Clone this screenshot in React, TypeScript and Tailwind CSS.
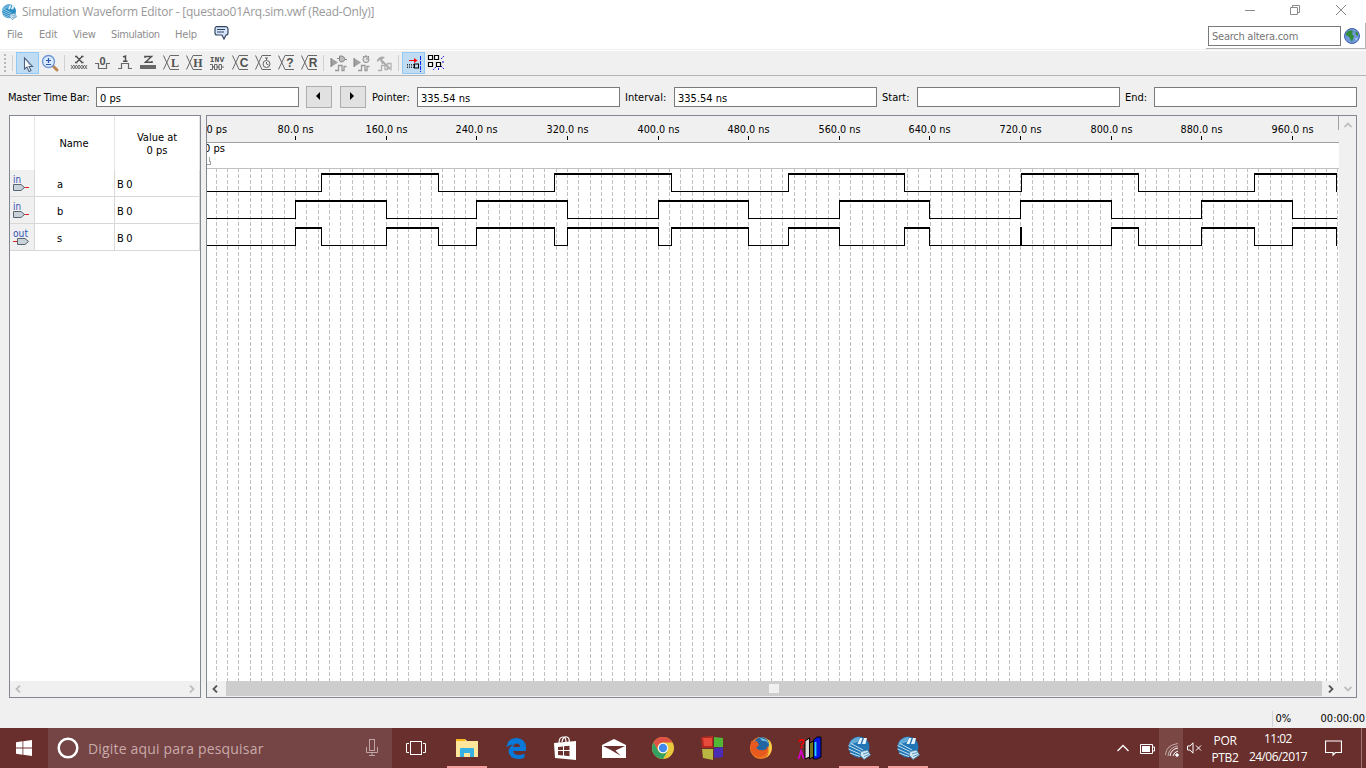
import React from "react";

const UI = "font-['DejaVu_Sans_Condensed','DejaVu_Sans','Noto_Sans',sans-serif]";

const A_EDGES = [321, 438, 554, 671, 788, 904, 1021, 1138, 1254, 1336];
const B_EDGES = [295, 386, 476, 567, 658, 748, 839, 929, 1020, 1111, 1201, 1292];
const S_EDGES = [
  295, 321, 386, 438, 476, 554, 567, 658, 671, 748, 788, 839, 904, 929, 1020, 1021,
  1111, 1138, 1201, 1254, 1292, 1336,
];
const CHART_LEFT = 207;
const CHART_RIGHT = 1337;

function Wave({ edges, top }: { edges: number[]; top: number }) {
  const parts: React.ReactElement[] = [];
  let x = CHART_LEFT;
  let high = false;
  [...edges, CHART_RIGHT].forEach((e, i) => {
    parts.push(
      <rect key={"h" + i} x={x - CHART_LEFT} y={high ? top : top + 18} width={Math.max(e - x, 1)} height={high ? 2 : 1} />
    );
    if (i < edges.length) {
      parts.push(<rect key={"v" + i} x={e - CHART_LEFT} y={top} width={1} height={19} />);
    }
    high = !high;
    x = e;
  });
  return <g fill="#000">{parts}</g>;
}

function Chart() {
  const grid = Array.from({ length: 100 }, (_, i) => Math.min(Math.round(204.3 + (i + 1) * 11.333), CHART_RIGHT));
  const labels = Array.from({ length: 12 }, (_, i) => (i + 1) * 80);
  return (
    <svg width="1132" height="565" viewBox="0 0 1132 565" shapeRendering="crispEdges" className="block">
      <rect width="1132" height="565" fill="#fff" />
      <rect width="1132" height="26" fill="#f0f0f0" />
      <rect y="26" width="1132" height="1" fill="#a0a0a0" />
      <rect x="1131" width="1" height="14" fill="#a0a0a0" />
      <rect y="52" width="1132" height="1" fill="#c0c0c0" />
      <g className={UI} fontSize="11" fill="#000">
        <text x="-0.5" y="17" textLength="20.500" lengthAdjust="spacingAndGlyphs">0 ps</text>
        <text x="-3" y="36" textLength="21" lengthAdjust="spacingAndGlyphs">0 ps</text>
        {labels.map((n) => {
          const w = n < 100 ? 36 : 42;
          const x = B_EDGES[n / 80 - 1] - CHART_LEFT;
          return (
            <g key={n}>
              <text x={x + 0.5 - w / 2} y="17" textLength={w} lengthAdjust="spacingAndGlyphs">{n}.0 ns</text>
              <rect x={x} y="20" width="1" height="4" />
            </g>
          );
        })}
      </g>
      <path d="M0 48.500H3.500V45.500H2.500V41" fill="none" stroke="#a0a0a0" />
      <g stroke="#c0c0c0" strokeDasharray="4 2">
        {grid.map((x) => (
          <path key={x} d={`M${x - CHART_LEFT + 0.5} 52V565`} />
        ))}
      </g>
      <Wave edges={A_EDGES} top={57} />
      <Wave edges={B_EDGES} top={84} />
      <Wave edges={S_EDGES} top={111} />
      <rect x="1129" y="57" width="1" height="18" />
      <rect x="813" y="111" width="2" height="19" />
    </svg>
  );
}

function AlteraLogo({ size, pale }: { size: number; pale?: boolean }) {
  return (
    <svg width={size} height={size} viewBox="0 0 24 24" className="shrink-0">
      <circle cx="12" cy="11" r="10.500" fill={pale ? "#2a8cc4" : "#2276b5"} />
      <path d="M3 6Q7 1 13 1L11 6Q6 7 2 10Z" fill="#7fc0e6" opacity="0.7" />
      <path d="M10.500 8L13 2H15.500L13.500 8ZM15 8L17 2H20L18.500 8Z" fill="#e8f4fb" />
      <path d="M1.500 9.500L15 16M1.500 13L14 18.500M4 7.500L16 14M3 17L13 20.500" fill="none" stroke="#c4e2f3" strokeWidth="1" />
      <path d="M14 15.500L20.500 14L23.500 19L17 23.500L13 19Z" fill="#cfe7f5" stroke="#3d7ea8" strokeWidth="0.800" />
      <path d="M16 18L21 16.500M17 20.500L22 18.500" stroke="#5d9ac2" />
    </svg>
  );
}

function ToolCell({ children, active }: { children: React.ReactNode; active?: boolean }) {
  return (
    <div className={active ? "h-[22px] w-[23px] shrink-0 border border-[#90c8f6] bg-[#c0dcf3]" : "h-[22px] w-[23px] shrink-0 border border-transparent"}>
      <svg width="23" height="22" viewBox="0 0 23 22" className="-m-px block">{children}</svg>
    </div>
  );
}

function ToolSep() {
  return <div className="h-4 w-px shrink-0 bg-[#d0d0d0]" />;
}

function Fork({ letter }: { letter?: string }) {
  return (
    <>
      <path d="M3.500 3.500L10 17.500H19M3.500 17.500L10 3.500H19" fill="none" stroke="#686868" />
      {letter && (
        <text x="15" y="15" fontSize="12" fontWeight="700" textAnchor="middle" fill="#505050" className={letter === "L" || letter === "H" ? "font-['Liberation_Serif',serif]" : "font-['Liberation_Sans',sans-serif]"}>
          {letter}
        </text>
      )}
    </>
  );
}

function SimGate() {
  return (
    <>
      <path d="M4 6L11 10.500L4 15Z" fill="#a0a0a0" />
      <path d="M4 6V15" stroke="#808080" />
      <path d="M8 18.500H11.500V13.500H15V18.500H17V14.500H19.500" fill="none" stroke="#999" strokeWidth="1.300" />
    </>
  );
}

function Toolbar() {
  return (
    <div className="flex h-[25px] shrink-0 items-center border-b border-[#b4b4b4] bg-[#f0f0f0] pb-px">
      <svg width="12" height="22" className="shrink-0"><path d="M5 2V20" stroke="#b8b8b8" strokeWidth="2" strokeDasharray="2 2" /></svg>
      <ToolSep />
      <div className="ml-[3px] flex">
        <ToolCell active>
          <path d="M8.500 6L8.500 17L11 15L13 19.500L15 18.500L13 14.500H16.500Z" fill="#fff" stroke="#4c6482" strokeWidth="1.100" />
          <path d="M13 13L15.500 13.500L10 8Z" fill="#92a9c4" />
        </ToolCell>
        <ToolCell>
          <path d="M14 14L18 18" stroke="#ba8755" strokeWidth="3" strokeLinecap="round" />
          <circle cx="9.500" cy="9.500" r="6" fill="#d7eaff" stroke="#7097d5" strokeWidth="1.400" />
          <path d="M7 8.500H12M9.500 6V11M7 12.500H12" stroke="#3056b0" strokeWidth="1.200" />
        </ToolCell>
      </div>
      <div className="mr-[3px] ml-[2px]"><ToolSep /></div>
      <ToolCell>
        <path d="M7 4.500H9.500M13 4.500H15.500M8.500 4.500L14 10.500M14 4.500L8.500 10.500M7 10.500H9.500M13 10.500H15.500" stroke="#505050" strokeWidth="1.400" />
        <path d="M3 13L5.700 17L8.400 13L11.100 17L13.800 13L16.500 17L19 13M3 17L5.700 13L8.400 17L11.100 13L13.800 17L16.500 13L19 17" fill="none" stroke="#707070" />
      </ToolCell>
      <ToolCell>
        <path d="M4 11.500H7.500V16.500H15.500V11.500H19" fill="none" stroke="#686868" strokeWidth="1.200" />
        <text x="11.500" y="12.500" fontSize="11" fontWeight="700" textAnchor="middle" fill="#505050" className="font-['Liberation_Sans',sans-serif]">0</text>
      </ToolCell>
      <ToolCell>
        <path d="M4 16.500H7.500V11.500H14.500V16.500H18" fill="none" stroke="#686868" strokeWidth="1.200" />
        <path d="M9 5L11.500 4V9.500M9 9.200H13.500" fill="none" stroke="#505050" strokeWidth="1.500" />
      </ToolCell>
      <ToolCell>
        <path d="M8 6V4.500H14.500L8.500 10.300H15V9" fill="none" stroke="#505050" strokeWidth="1.500" />
        <path d="M3 15H19" stroke="#696969" strokeWidth="4" />
      </ToolCell>
      <ToolCell><Fork letter="L" /></ToolCell>
      <ToolCell><Fork letter="H" /></ToolCell>
      <ToolCell>
        <text x="11" y="10" fontSize="8" fontWeight="700" textAnchor="middle" fill="#505050" className="font-['Liberation_Mono',monospace]">INV</text>
        <path d="M4 12.500H6.500V15H8.500V12.500H11V15H13V12.500H15.500V15H18M4 17.500H6.500V15H8.500V17.500H11V15H13V17.500H15.500V15" fill="none" stroke="#686868" />
      </ToolCell>
      <ToolCell><Fork letter="C" /></ToolCell>
      <ToolCell>
        <Fork />
        <circle cx="14.500" cy="12" r="3.500" fill="#f0f0f0" stroke="#666" />
        <path d="M13 6H16M14.500 6V8M14.500 10V12L16.500 13" fill="none" stroke="#666" />
      </ToolCell>
      <ToolCell><Fork letter="?" /></ToolCell>
      <ToolCell><Fork letter="R" /></ToolCell>
      <div className="mr-[3px] ml-[2px]"><ToolSep /></div>
      <ToolCell>
        <SimGate />
        <path d="M10 6.500H13M18 7.500H20M12.500 4H15Q18 5 18 7.500Q17 10 14 10L12.500 9Z" fill="#bbb" stroke="#888" />
      </ToolCell>
      <ToolCell>
        <SimGate />
        <circle cx="16" cy="7.500" r="3" fill="#e4e4e4" stroke="#888" />
        <path d="M16 3V5M16 7H18M13 4L14 5M19 4L18 5" stroke="#888" />
      </ToolCell>
      <ToolCell>
        <path d="M4 8Q7 3 12 5L9 8L11 11L9 12L7 8L4 10Z" fill="#aaa" />
        <path d="M9 9L17 17" stroke="#aaa" strokeWidth="2" />
        <path d="M5 18.500H8.500V13.500H12V17.500H14.500V11.500H18V18.500" fill="none" stroke="#b0b0b0" strokeWidth="1.300" />
      </ToolCell>
      <div className="mr-[3px] ml-[2px]"><ToolSep /></div>
      <ToolCell active>
        <path d="M7 8.500H13" stroke="#f00" /><path d="M12 6L15.500 8.500L12 11Z" fill="#f00" />
        <path d="M5 12.500H12M5 15.500H12M5 14H12" stroke="#333" strokeDasharray="1 1" />
        <rect x="12.500" y="12" width="4" height="4" fill="none" stroke="#000" />
        <path d="M18.500 4V20" stroke="#1225f0" strokeDasharray="4 1" />
      </ToolCell>
      <ToolCell>
        <path d="M3.500 3.500H7.500V7.500H3.500ZM9.500 3.500H13.500V7.500H9.500ZM3.500 10.500H7.500V14.500H3.500ZM11.500 10.500H15.500V14.500H11.500Z" fill="#fff" stroke="#000" strokeWidth="1.200" />
        <path d="M16 7L19 4M17 10H20M16 14L19 17M13.500 16V19M11 15L8 18" stroke="#1010d8" strokeDasharray="2 1" />
      </ToolCell>
    </div>
  );
}

function Field({ label, value, w }: { label: string; value: string; w: string }) {
  return (
    <>
      <span className={"shrink-0 pt-px whitespace-nowrap " + w}>{label}</span>
      <div className="flex h-5 w-[203px] shrink-0 items-center border border-[#7a7a7a] bg-white pt-[3px] pl-[3px]">{value}</div>
    </>
  );
}

function StepButton({ left }: { left?: boolean }) {
  return (
    <div className="flex h-[22px] w-[26px] shrink-0 items-center justify-center border border-[#adadad] bg-[#e1e1e1]">
      <svg width="6" height="8" viewBox="0 0 6 8" className="mr-0.5 mb-0.5">
        <path d={left ? "M5 0V8L1 4Z" : "M1 0V8L5 4Z"} />
      </svg>
    </div>
  );
}

function Chevron({ d, color }: { d: string; color: string }) {
  return (
    <svg width="8" height="8" viewBox="0 0 8 8" className="shrink-0">
      <path d={d} fill="none" stroke={color} strokeWidth="1.800" />
    </svg>
  );
}
const LEFT = "M6 0.500L2.500 4L6 7.500";
const RIGHT = "M2 0.500L5.500 4L2 7.500";

function Pin({ out }: { out?: boolean }) {
  return (
    <svg width="25" height="26" viewBox="0 0 25 26" className="block">
      <text x="3" y="12.500" fontSize="11" fill="#3050b4" className={UI} textLength={out ? 15 : 8} lengthAdjust="spacingAndGlyphs">{out ? "out" : "in"}</text>
      {out ? (
        <>
          <path d="M3 17.500H7" stroke="#e02020" />
          <path d="M7.500 14.500H15L18.500 17.500L15 20.500H7.500Z" fill="#c9d2d8" stroke="#566570" />
        </>
      ) : (
        <>
          <path d="M14 17.500H19" stroke="#e02020" />
          <path d="M3.500 14.500H11L14.500 17.500L11 20.500H3.500Z" fill="#c9d2d8" stroke="#566570" />
        </>
      )}
    </svg>
  );
}

function SignalTable() {
  return (
    <div className="flex w-[192px] shrink-0 flex-col border border-[#828790] bg-white">
      <div className="flex h-[54px] shrink-0 text-center">
        <div className="w-[25px] border-r border-[#e5e5e5]" />
        <div className="flex w-20 items-center justify-center border-r border-[#e5e5e5] pt-0.5 pr-px">Name</div>
        <div className="flex w-[85px] items-center justify-center border-r border-[#e5e5e5] pt-0.5 leading-[13px]">Value at<br />0 ps</div>
      </div>
      {["a", "b", "s"].map((n) => (
        <div key={n} className="flex h-[27px] shrink-0">
          <div className="w-[25px] border-r border-b border-[#d8d8d8] bg-[#f0f0f0]"><Pin out={n === "s"} /></div>
          <div className="flex w-20 items-center border-r border-b border-[#d8d8d8] pt-1 pl-[22px]">{n}</div>
          <div className="flex w-[85px] items-center border-r border-b border-[#d8d8d8] pt-1 pl-0.5 tracking-[-0.3px]">B 0</div>
        </div>
      ))}
      <div className="grow" />
      <div className="flex h-4 shrink-0 items-center justify-between bg-[#f0f0f0] px-[4px] pb-px">
        <Chevron d={LEFT} color="#bfbfbf" />
        <Chevron d={RIGHT} color="#bfbfbf" />
      </div>
    </div>
  );
}

function WavePanel() {
  return (
    <div className="flex w-[1151px] shrink-0 border border-[#828790]">
      <div className="flex w-[1132px] shrink-0 flex-col">
        <Chart />
        <div className="flex h-4 shrink-0 items-center bg-[#f0f0f0] pb-px">
          <div className="flex w-[19px] justify-center pr-[3px]"><Chevron d={LEFT} color="#555" /></div>
          <div className="flex h-[15px] w-[1096px] items-center bg-[#cdcdcd] pl-[543px]"><div className="h-[9px] w-[10px] bg-[#f0f0f0]" /></div>
          <div className="flex grow justify-center"><Chevron d={RIGHT} color="#555" /></div>
        </div>
      </div>
      <div className="flex grow flex-col items-center justify-between bg-[#f0f0f0] pt-[5px] pb-1">
        <Chevron d="M0.500 6L4 2.500L7.500 6" color="#bfbfbf" />
        <Chevron d="M0.500 2L4 5.500L7.500 2" color="#bfbfbf" />
      </div>
    </div>
  );
}

function Slot({ children, open }: { children?: React.ReactNode; open?: boolean }) {
  return (
    <div className={"flex h-10 w-[49px] shrink-0 flex-col items-center " + (open ? "justify-between" : "justify-center")}>
      <div className={open ? "flex h-[38px] items-center" : "flex items-center"}>{children}</div>
      {open && <div className="h-0.5 w-10 bg-[#f5a0a0]" />}
    </div>
  );
}

function Taskbar() {
  return (
    <div className="flex h-10 shrink-0 bg-[#692f2c] font-['Open_Sans','Noto_Sans',sans-serif] text-white">
      <div className="flex w-12 shrink-0 items-center justify-center">
        <svg width="16" height="16" viewBox="0 0 16 16" fill="#fff"><path d="M0 2.300L6.500 1.300V7.500H0ZM7.300 1.200L16 0V7.500H7.300ZM0 8.400H6.500V14.700L0 13.700ZM7.300 8.400H16V16L7.300 14.800Z" /></svg>
      </div>
      <div className="flex w-[344px] shrink-0 items-center bg-[#754445] pr-[14px] pl-[9px]">
        <svg width="22" height="22" className="shrink-0"><circle cx="11" cy="11" r="9.300" fill="none" stroke="#fff" strokeWidth="2.500" /></svg>
        <span className="ml-[9px] w-[175px] pt-px text-[14px] tracking-[0.18px] whitespace-nowrap text-[#c9abab]">Digite aqui para pesquisar</span>
        <svg width="12" height="18" viewBox="0 0 12 18" className="ml-auto" fill="none" stroke="#c0a5a6"><rect x="3.500" y="0.500" width="5" height="11" /><path d="M0.500 8V13.500H11.500V8M6 13.500V16.500M3 16.500H9" /></svg>
      </div>
      <Slot>
        <svg width="20" height="14" viewBox="0 0 20 14" fill="none" stroke="#fff" className="mr-px"><rect x="4.500" y="0.500" width="11" height="13" /><path d="M3 2.500H0.500V11.500H3M17 2.500H19.500V11.500H17" /></svg>
      </Slot>
      <div className="ml-px flex">
        <Slot open>
          <svg width="22" height="18" viewBox="0 0 22 18" className="mt-0.5"><path d="M0 0H9L11 2H22V18H0Z" fill="#ffe69a" /><path d="M0 0H9V2H0Z" fill="#f6b91c" /><path d="M4 18V10Q4 9 5 9H17Q18 9 18 10V18H14V14H8V18Z" fill="#38b0e4" /></svg>
        </Slot>
        <Slot>
          <svg width="20" height="21" viewBox="0 0 20 21"><path d="M0.500 9.500Q1.500 0 11 0Q20 1 20 10V13H7Q8 17 13 17Q16 17 18.500 15.500V19.500Q16 21 12 21Q3 20.500 2.500 13Q3 8.500 7.500 6.500Q3 6.500 0.500 9.500ZM7 9H14Q14 5.500 10.500 5.500Q7.500 6 7 9Z" fill="#0879d8" fillRule="evenodd" /></svg>
        </Slot>
        <Slot>
          <svg width="22" height="24" viewBox="0 0 22 24"><path d="M5 7Q5 1 9 1Q12 1 12 6M8 6Q9 0 13 1Q16 2 15 6" fill="none" stroke="#fff" strokeWidth="1.200" /><path d="M0 7L22 5V24L1 22Z" fill="#fff" /><path d="M4 11L9 10.500V14H4ZM10 10.300L15.500 9.800V14H10ZM4 15H9V19.500L4 19ZM10 15H15.500V20.200L10 19.600Z" fill="#6a302d" /></svg>
        </Slot>
        <Slot>
          <svg width="24" height="19" viewBox="0 0 24 19"><path d="M0 6L12 0L24 6V19H0Z" fill="#fff" /><path d="M1 7H23L13.500 11.500L19 17L8 10.500Z" fill="#6a302d" /></svg>
        </Slot>
        <Slot>
          <svg width="22" height="22" viewBox="0 0 22 22"><circle cx="11" cy="11" r="11" fill="#eac83b" /><path d="M1.500 5.500A11 11 0 0 1 20.600 5.500H11A5.500 5.500 0 0 0 6.200 13.700Z" fill="#df5145" /><path d="M1.500 5.500A11 11 0 0 0 11 22L15.800 13.700A5.500 5.500 0 0 1 6.200 13.700Z" fill="#34a164" /><circle cx="11" cy="11" r="5.200" fill="#fff" /><circle cx="11" cy="11" r="4.200" fill="#4388ed" /></svg>
        </Slot>
        <Slot>
          <svg width="22" height="24" viewBox="0 0 22 24"><path d="M0 1L12 0V12H1Z" fill="#b52a20" /><path d="M2 2H11V10H3Z" fill="#e84a3c" /><path d="M13 1L22 2V11H13Z" fill="#52b734" /><path d="M1 13H12V24L2 22Z" fill="#b9b642" /><path d="M13 12L22 11V21L13 22Z" fill="#4a2cb5" /></svg>
        </Slot>
        <Slot>
          <svg width="22" height="22" viewBox="0 0 22 22"><circle cx="11" cy="11" r="11" fill="#ed7625" /><path d="M8 0Q22 0 22 11Q21 18 16 21Q21 15 17 8Q16 4 10 4Z" fill="#f6cd45" /><circle cx="11.500" cy="7.500" r="7.500" fill="#2366a4" /><path d="M10 1Q17 1 19 7Q16 3 12 4Z" fill="#74bade" /><path d="M1 4L4 5L7 4L9 8L6 11Q9 14 14 13Q17 12 18 9Q19 17 11 20Q2 20 0.500 11Z" fill="#e8591e" /></svg>
        </Slot>
        <Slot>
          <svg width="25" height="24" viewBox="0 0 25 24"><text x="0.500" y="12" fontSize="13" fontWeight="700" fill="#f00" className="font-['Liberation_Sans',sans-serif]">?</text><path d="M1.500 23L4 15L7 23" fill="none" stroke="#d400c8" strokeWidth="1.800" /><path d="M8 5L12.500 2V21L8 23Z" fill="#ddd" stroke="#000" /><path d="M12.500 7L16.500 5V21L12.500 23Z" fill="#77731d" stroke="#000" /><path d="M16.500 4L20 1H24V21L20 23H16.500Z" fill="#0716df" stroke="#000" /><path d="M18.500 6V20" stroke="#26d8f0" strokeWidth="1.800" /></svg>
        </Slot>
        <Slot open><div className="pt-0.5"><AlteraLogo size={24} /></div></Slot>
        <Slot open><div className="pt-0.5"><AlteraLogo size={24} /></div></Slot>
      </div>
      <div className="ml-auto flex shrink-0 items-center">
        <svg width="12" height="8" viewBox="0 0 12 8" fill="none" stroke="#fff" strokeWidth="1.300"><path d="M0.500 7L6 1.500L11.500 7" /></svg>
        <svg width="15" height="10" viewBox="0 0 15 10" className="mt-px ml-[11px]"><path d="M0.500 0.500H12.500V9.500H0.500ZM13 3H14.500V7H13" fill="none" stroke="#fff" /><path d="M2 2H10V8H2Z" fill="#fff" /></svg>
        <div className="ml-1 flex h-10 w-6 items-center justify-center bg-[#7b4744]">
          <svg width="14" height="14" viewBox="0 0 14 14" fill="none" stroke="#fff" className="mt-1 ml-0.5"><path d="M5 13Q6 6 13 5M8 13Q9 9 13 8" /><path d="M0.500 12Q1 2 13 0.500M3 13Q4 4 13 3" opacity="0.550" /><circle cx="12" cy="12" r="1.300" fill="#fff" /></svg>
        </div>
        <svg width="15" height="12" viewBox="0 0 15 12" className="ml-1" fill="none" stroke="#fff"><path d="M0.500 4H3L6 0.800V11.200L3 8H0.500ZM9 3.500L14 8.500M14 3.500L9 8.500" /></svg>
        <div className="ml-[7px] w-[32px] pt-px text-center text-[12px] leading-[17px] tracking-[-0.3px] whitespace-nowrap">POR<br />PTB2</div>
        <div className="ml-[5px] w-[64px] text-center text-[12px] leading-[18px] tracking-[-0.55px] whitespace-nowrap">11:02<br />24/06/2017</div>
        <svg width="17" height="17" viewBox="0 0 17 17" className="mr-[19px] ml-[15px]" fill="none" stroke="#fff" strokeWidth="1.200"><path d="M0.500 1H16.500V12.500H10.500L8 15V12.500H0.500Z" /></svg>
        <div className="mr-1 h-10 w-px bg-[#9f7775]" />
      </div>
    </div>
  );
}

export default function App() {
  return (
    <div className={"flex h-[768px] w-[1366px] flex-col overflow-hidden bg-[#f0f0f0] text-[11px] leading-[14px] text-black " + UI}>
      <div className="flex h-[49px] shrink-0 bg-white text-[#8e8e8e]">
        <div className="w-[1206px]">
          <div className="flex h-[23px] items-center gap-[5px] pl-px font-['Open_Sans','Noto_Sans',sans-serif] text-[12px] text-[#999]">
            <AlteraLogo size={16} pale />
            <span className="pt-px tracking-[-0.24px] whitespace-nowrap">Simulation Waveform Editor - [questao01Arq.sim.vwf (Read-Only)]</span>
          </div>
          <div className="flex h-[22px] items-center pt-0.5 pl-[7px] tracking-[-0.2px]">
            <span className="w-8">File</span><span className="w-[34px]">Edit</span><span className="w-[38px]">View</span><span className="w-16 tracking-[-0.4px]">Simulation</span><span className="w-[39px]">Help</span>
            <svg width="15" height="14" viewBox="0 0 15 14" className="-mt-1"><path d="M2 0.700H12Q14 1 14 3V7Q14 9 12 9L10 13L8 9H3Q1 9 1 7V3Q1 1 2 0.700Z" fill="#d5e5fb" stroke="#33445f" strokeWidth="1.200" /><path d="M3 3.500H11M3 6H10" stroke="#33445f" /></svg>
          </div>
        </div>
        <div className="flex grow flex-col">
          <div className="flex h-[23px] items-center pl-[39px]">
            <svg width="102" height="12" viewBox="0 0 102 12" className="-mt-1" fill="none" stroke="#8b8b8b"><path d="M0 6.500H10M45.500 3.500H52.500V10.500H45.500ZM47.500 3V1.500H54.500V8.500H53M91 1L101 11M101 1L91 11" /></svg>
          </div>
          <div className="flex h-[26px] items-center border-r border-b border-[#b4b4b4] pl-0.5">
            <div className="flex h-5 w-[133px] items-center border border-[#7a7a7a] pt-[3px] pl-[3px] tracking-[-0.25px] text-[#767676]">Search altera.com</div>
            <svg width="16" height="16" viewBox="0 0 16 16" className="ml-[3px]"><circle cx="8" cy="8" r="7.500" fill="#6f97dc" stroke="#4362a8" /><path d="M2 5Q5 1 9 3L8 6L10 8L9 11L8 14L5 9L2 7Z" fill="#328c3c" /><path d="M11 3L14 5V8L12 7Z" fill="#328c3c" /><path d="M11 10H14L12 13Z" fill="#a8c8f0" /></svg>
          </div>
        </div>
      </div>
      <div className="h-[2px] shrink-0 border-b border-white bg-[#f0f0f0]" />
      <Toolbar />
      <div className="flex h-[39px] shrink-0 items-center pt-[3px] pl-2">
        <Field label="Master Time Bar:" value="0 ps" w="w-[88px] tracking-[-0.18px]" />
        <div className="mr-1.5 ml-[7px] flex gap-2"><StepButton left /><StepButton /></div>
        <Field label="Pointer:" value="335.54 ns" w="w-[45px]" />
        <Field label="Interval:" value="335.54 ns" w="ml-[5px] w-[49px]" />
        <Field label="Start:" value="" w="ml-[5px] w-[35px]" />
        <Field label="End:" value="" w="ml-[5px] w-[29px]" />
      </div>
      <div className="flex h-[583px] shrink-0 gap-[5px] pl-[9px]">
        <SignalTable />
        <WavePanel />
      </div>
      <div className="flex grow items-center justify-end pt-[11px] pr-px">
        <div className="mr-[26px] h-4 w-[23px] border-l border-[#d4d4d4] pt-px pl-[3px]">0%</div>
        <span>00:00:00</span>
      </div>
      <Taskbar />
    </div>
  );
}
